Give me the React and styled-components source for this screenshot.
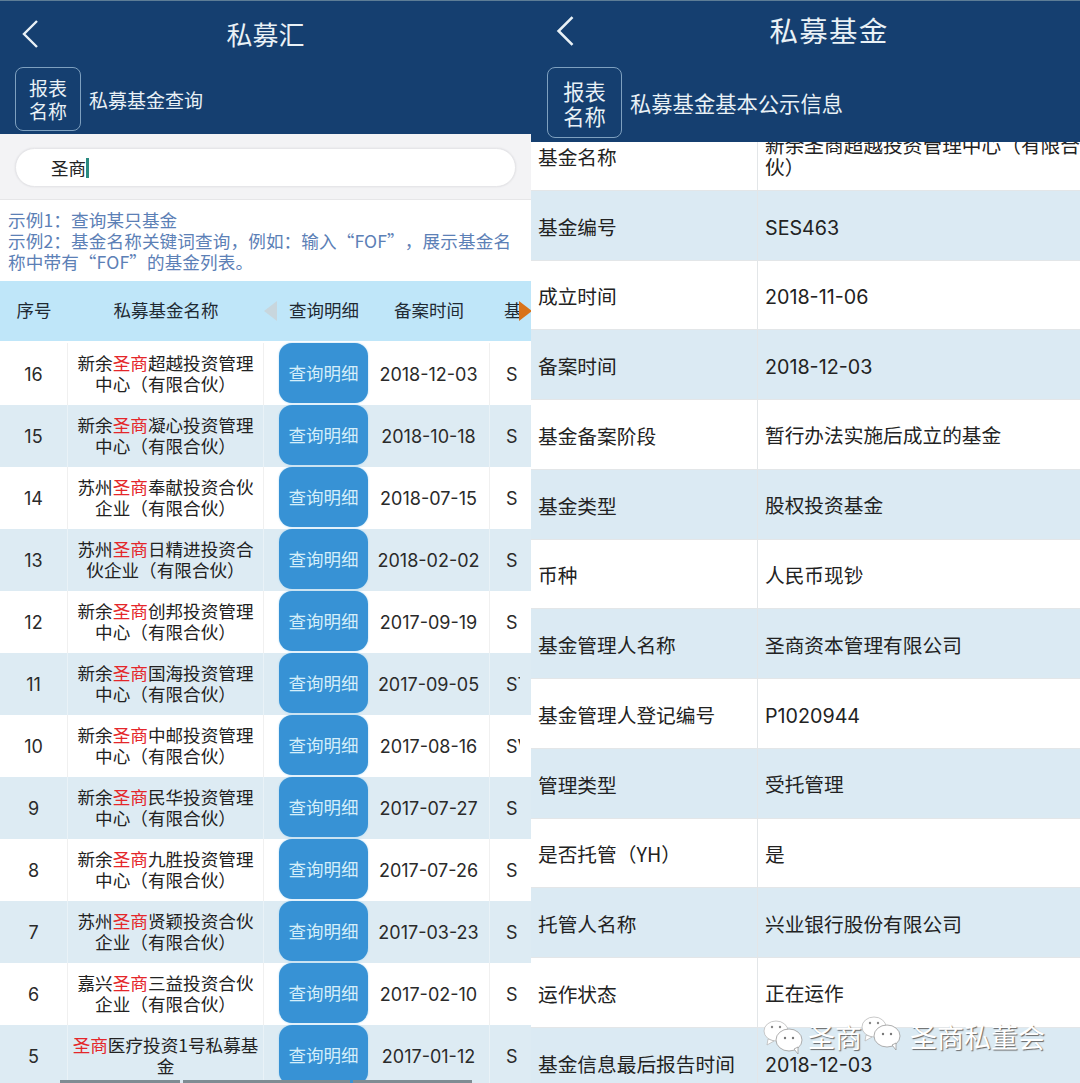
import React from "react";
import styled, { createGlobalStyle } from "styled-components";

const funds = [
  { no: 16, pre: "新余", post: "超越投资管理中心（有限合伙）", date: "2018-12-03", code: "S" },
  { no: 15, pre: "新余", post: "凝心投资管理中心（有限合伙）", date: "2018-10-18", code: "S" },
  { no: 14, pre: "苏州", post: "奉献投资合伙企业（有限合伙）", date: "2018-07-15", code: "S" },
  { no: 13, pre: "苏州", post: "日精进投资合伙企业（有限合伙）", date: "2018-02-02", code: "S" },
  { no: 12, pre: "新余", post: "创邦投资管理中心（有限合伙）", date: "2017-09-19", code: "S" },
  { no: 11, pre: "新余", post: "国海投资管理中心（有限合伙）", date: "2017-09-05", code: "ST" },
  { no: 10, pre: "新余", post: "中邮投资管理中心（有限合伙）", date: "2017-08-16", code: "SV" },
  { no: 9, pre: "新余", post: "民华投资管理中心（有限合伙）", date: "2017-07-27", code: "S" },
  { no: 8, pre: "新余", post: "九胜投资管理中心（有限合伙）", date: "2017-07-26", code: "S" },
  { no: 7, pre: "苏州", post: "贤颖投资合伙企业（有限合伙）", date: "2017-03-23", code: "S" },
  { no: 6, pre: "嘉兴", post: "三益投资合伙企业（有限合伙）", date: "2017-02-10", code: "S" },
  { no: 5, pre: "", post: "医疗投资1号私募基金", date: "2017-01-12", code: "S" },
];

const details = [
  ["基金名称", "新余圣商超越投资管理中心（有限合伙）"],
  ["基金编号", "SES463"],
  ["成立时间", "2018-11-06"],
  ["备案时间", "2018-12-03"],
  ["基金备案阶段", "暂行办法实施后成立的基金"],
  ["基金类型", "股权投资基金"],
  ["币种", "人民币现钞"],
  ["基金管理人名称", "圣商资本管理有限公司"],
  ["基金管理人登记编号", "P1020944"],
  ["管理类型", "受托管理"],
  ["是否托管（YH）", "是"],
  ["托管人名称", "兴业银行股份有限公司"],
  ["运作状态", "正在运作"],
  ["基金信息最后报告时间", "2018-12-03"],
];

const Global = createGlobalStyle`
  html, body { margin: 0; padding: 0; background: #fff; }
  body {
    font-family: "Noto Sans CJK SC", "Liberation Sans", sans-serif;
    color: #222;
    text-spacing-trim: space-all;
  }
`;

const Page = styled.div`
  position: relative;
  width: 1080px;
  height: 1083px;
  display: flex;
  overflow: hidden;
`;

const Panel = styled.div`
  width: ${(p) => p.$width}px;
  height: 1083px;
  display: flex;
  flex-direction: column;
  overflow: hidden;
  flex: none;
`;

const Header = styled.header`
  position: relative;
  z-index: 2;
  flex: none;
  height: ${(p) => p.$height}px;
  box-sizing: border-box;
  background: #153f70;
  border-top: 1px solid #5d7d96;
  color: #e9f1f6;
`;

const TopBar = styled.div`
  height: 66px;
  box-sizing: border-box;
  display: flex;
  align-items: center;
  padding-left: ${(p) => p.$left}px;
  padding-bottom: ${(p) => p.$bottom}px;
`;

const Back = styled.svg`
  flex: none;
  fill: none;
  stroke: #e9f1f6;
  stroke-width: 2.4;
`;

const Title = styled.div`
  flex: 1;
  text-align: center;
  font-size: ${(p) => p.$size}px;
  letter-spacing: ${(p) => p.$spacing}px;
  padding-left: ${(p) => p.$shift}px;
  padding-right: 38px;
  padding-bottom: 1px;
  line-height: 1.2;
`;

const ReportRow = styled.div`
  display: flex;
  align-items: center;
  padding-left: ${(p) => p.$left}px;
  gap: 8px;
`;

const ReportBox = styled.div`
  box-sizing: border-box;
  width: ${(p) => p.$w}px;
  height: ${(p) => p.$h}px;
  border: 1px solid #7ea0bf;
  border-radius: 8px;
  display: flex;
  align-items: center;
  justify-content: center;
  text-align: center;
  font-size: ${(p) => p.$size}px;
  line-height: ${(p) => p.$line}px;
`;

const ReportName = styled.div`
  font-size: ${(p) => p.$size}px;
  white-space: nowrap;
`;

const SearchArea = styled.div`
  flex: none;
  height: 66px;
  box-sizing: border-box;
  padding: 14px 15px 0;
  background: #f3f3f5;
  border-bottom: 1px solid #e6e6e8;
`;

const SearchBox = styled.div`
  height: 39px;
  box-sizing: border-box;
  padding-left: 35px;
  display: flex;
  align-items: center;
  border-radius: 20px;
  background: #fff;
  border: 1px solid #e6e6e9;
  box-shadow: 0 0 2px #dcdcdf;
  font-size: 17.5px;
`;

const Caret = styled.span`
  width: 3px;
  height: 20px;
  background: #2a8a80;
`;

const Hints = styled.div`
  flex: none;
  height: 81px;
  box-sizing: border-box;
  padding: 9px 14px 0 8px;
  font-size: 17.6px;
  letter-spacing: 0.12px;
  line-height: 21px;
  color: #5c80b6;
`;

const TableHead = styled.div`
  position: relative;
  flex: none;
  height: 60px;
  box-sizing: border-box;
  padding-bottom: 3px;
  display: grid;
  grid-template-columns: 68px 196px 104px 122px 41px;
  align-items: center;
  text-align: center;
  background: #bfe6f9;
  font-size: 17.5px;
  color: #1f2a33;
`;

const HeadAction = styled.span`
  padding-left: 16px;
`;

const Clip = styled.div`
  width: 30px;
  box-sizing: border-box;
  overflow: hidden;
  white-space: nowrap;
  text-align: left;
  padding-left: 14px;
`;

const ScrollArrow = styled.span`
  position: absolute;
  top: 20px;
  width: 0;
  height: 0;
  border-top: 10px solid transparent;
  border-bottom: 10px solid transparent;
  ${(p) => p.$side === "left"
    ? "left: 264px; border-right: 13px solid #c8d6dd;"
    : "right: -1px; border-left: 13px solid #d9731a;"}
`;

const List = styled.div`
  flex: 1;
  padding-top: 2px;
`;

const Row = styled.div`
  height: 62px;
  display: grid;
  grid-template-columns: 68px 196px 104px 122px 41px;
  background: ${(p) => (p.$alt ? "#ddebf3" : "#fff")};
  font-size: 17.5px;
`;

const Cell = styled.div`
  display: flex;
  align-items: center;
  justify-content: center;
  text-align: center;
  box-sizing: border-box;
  border-right: ${(p) => (p.$line ? `1px solid ${p.$alt ? "#e9f2f7" : "#f0f0f0"}` : "none")};
`;

const FundName = styled(Cell)`
  padding: 0 3px 3px;
  line-height: 21px;
  font-size: 17.6px;
`;

const Mark = styled.span`
  color: #e4262a;
`;

const DetailButton = styled.div`
  box-sizing: border-box;
  width: 89px;
  height: 60px;
  margin: 0 0 2px 15px;
  padding-bottom: 2px;
  border-radius: 13px;
  background: #3792d5;
  box-shadow: 0 0 2px #9fd2f0;
  color: #d4eefa;
  display: flex;
  align-items: center;
  justify-content: center;
  font-size: 17.5px;
  align-self: center;
`;

const Num = styled(Cell)`
  font-family: "Inter", "Liberation Sans", sans-serif;
  font-size: ${(p) => p.$size || 18}px;
  color: #2a2a2a;
`;

const Code = styled(Num)`
  justify-content: flex-start;
  width: 30px;
  padding-left: 16px;
  overflow: hidden;
  white-space: nowrap;
`;

const Detail = styled.div`
  flex: 1;
  margin-top: -21px;
  font-size: 19.7px;
`;

const DetailRow = styled.div`
  height: 69.75px;
  display: grid;
  grid-template-columns: 227px 1fr;
  box-sizing: border-box;
  border-bottom: 1px solid #e3e6e8;
  background: ${(p) => (p.$alt ? "#dbeaf3" : "#fff")};
`;

const Label = styled.div`
  display: flex;
  align-items: center;
  padding: 2px 0 0 7px;
  border-right: 1px solid #e3e6e8;
  white-space: nowrap;
`;

const Value = styled.div`
  display: flex;
  align-items: center;
  padding: ${(p) => (p.$latin ? 5 : 2)}px 0 0 7px;
  line-height: 22px;
  font-family: ${(p) => (p.$latin ? '"Inter", "Noto Sans CJK SC", sans-serif' : "inherit")};
`;

const Scrollbar = styled.div`
  position: absolute;
  left: 60px;
  bottom: 0;
  display: flex;
  gap: 3px;
`;

const ScrollPiece = styled.span`
  height: 3px;
  width: ${(p) => p.$w}px;
  background: #7f8c93;
`;

const Watermark = styled.div`
  position: absolute;
  left: 762px;
  top: 1018px;
  display: flex;
  align-items: center;
  color: #fff;
  font-size: 27px;
  line-height: 36px;
  white-space: nowrap;
  text-shadow: 1px 1px 1px #666;
`;

const Wechat = styled.svg`
  flex: none;
  margin: ${(p) => p.$margin};
`;

const WechatIcon = ({ margin }) => (
  <Wechat width="42" height="38" viewBox="0 0 42 38" $margin={margin}>
    <ellipse cx="14" cy="13" rx="12" ry="10" fill="#fff" stroke="#bbb" strokeWidth="0.8" />
    <path d="M6 21 L5 27 L12 23 Z" fill="#fff" stroke="#bbb" strokeWidth="0.8" />
    <ellipse cx="27" cy="22" rx="13" ry="11" fill="#fff" stroke="#999" strokeWidth="0.8" />
    <path d="M32 31 L36 36 L36 29 Z" fill="#fff" stroke="#999" strokeWidth="0.8" />
    <circle cx="10" cy="9" r="1.2" fill="#888" />
    <circle cx="18" cy="9" r="1.2" fill="#888" />
    <circle cx="23" cy="20" r="1.2" fill="#777" />
    <circle cx="31" cy="20" r="1.2" fill="#777" />
  </Wechat>
);

const BackIcon = ({ w, h }) => (
  <Back width={w} height={h} viewBox="0 0 16 28">
    <path d="M15 1 L2 14 L15 27" />
  </Back>
);

export default function App() {
  return (
    <Page lang="zh-CN">
      <Global />
      <Panel $width={531}>
        <Header $height={134}>
          <TopBar $left={22} $bottom={0}>
            <BackIcon w={16} h={28} />
            <Title $size={26} $spacing={0} $shift={0}>私募汇</Title>
          </TopBar>
          <ReportRow $left={15}>
            <ReportBox $w={66} $h={64} $size={19} $line={23}>报表<br />名称</ReportBox>
            <ReportName $size={19}>私募基金查询</ReportName>
          </ReportRow>
        </Header>
        <SearchArea>
          <SearchBox>圣商<Caret /></SearchBox>
        </SearchArea>
        <Hints>
          示例1：查询某只基金<br />
          示例2：基金名称关键词查询，例如：输入“FOF”，展示基金名称中带有“FOF”的基金列表。
        </Hints>
        <TableHead>
          <span>序号</span>
          <span>私募基金名称</span>
          <HeadAction>查询明细</HeadAction>
          <span>备案时间</span>
          <Clip>基金</Clip>
          <ScrollArrow $side="left" />
          <ScrollArrow $side="right" />
        </TableHead>
        <List>
          {funds.map((f, i) => (
            <Row key={f.no} $alt={i % 2 === 1}>
              <Num $line $alt={i % 2 === 1}>{f.no}</Num>
              <FundName $line $alt={i % 2 === 1}>
                <span>{f.pre}<Mark>圣商</Mark>{f.post}</span>
              </FundName>
              <DetailButton>查询明细</DetailButton>
              <Num $line $alt={i % 2 === 1}>{f.date}</Num>
              <Code>{f.code}</Code>
            </Row>
          ))}
        </List>
      </Panel>

      <Panel $width={549}>
        <Header $height={142}>
          <TopBar $left={25} $bottom={6}>
            <BackIcon w={18} h={30} />
            <Title $size={28.5} $spacing={1.2} $shift={42}>私募基金</Title>
          </TopBar>
          <ReportRow $left={16}>
            <ReportBox $w={75} $h={71} $size={21.3} $line={25}>报表<br />名称</ReportBox>
            <ReportName $size={21.3}>私募基金基本公示信息</ReportName>
          </ReportRow>
        </Header>
        <Detail>
          {details.map(([k, v], i) => (
            <DetailRow key={k} $alt={i % 2 === 1}>
              <Label>{k}</Label>
              <Value $latin={/^[A-Z0-9]/.test(v)}>{v}</Value>
            </DetailRow>
          ))}
        </Detail>
      </Panel>

      <Scrollbar>
        <ScrollPiece $w={120} />
        <ScrollPiece $w={167} />
        <ScrollPiece $w={119} />
      </Scrollbar>

      <Watermark>
        <WechatIcon margin="0 4px 0 0" />
        <span>圣商</span>
        <WechatIcon margin="-8px 8px 0 -2px" />
        <span>圣商私董会</span>
      </Watermark>
    </Page>
  );
}
